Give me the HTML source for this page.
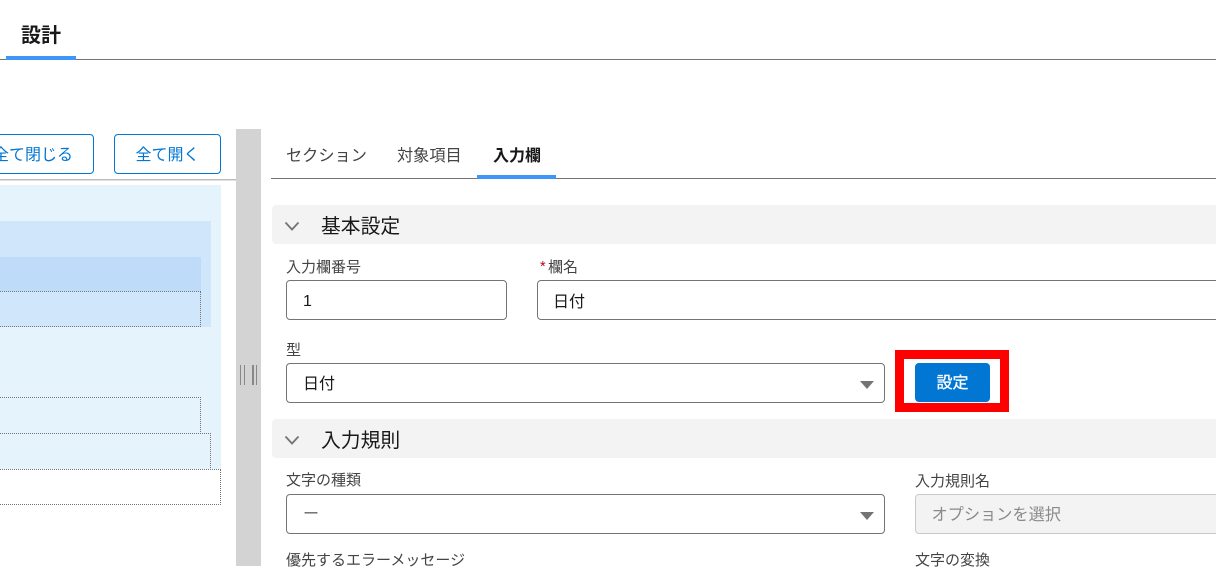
<!DOCTYPE html>
<html lang="ja">
<head>
<meta charset="utf-8">
<title>設計</title>
<style>
html,body{margin:0;padding:0;background:#fff;}
body{width:1216px;height:566px;overflow:hidden;position:relative;font-family:"Liberation Sans","Noto Sans CJK JP",sans-serif;color:#181818;}
.a{position:absolute;box-sizing:border-box;}
.t{position:absolute;white-space:nowrap;line-height:20px;height:20px;}
.lbl{font-size:15px;color:#444;}
.inp{position:absolute;box-sizing:border-box;border:1px solid #747474;border-radius:4px;background:#fff;}
.val{font-size:16px;color:#181818;}
.sec{position:absolute;left:272px;width:960px;height:39px;background:#f3f3f3;border-radius:4px;}
.sect{font-size:20px;color:#181818;line-height:28px;height:28px;}
.box{position:absolute;box-sizing:border-box;left:-5px;border:1px dotted #747474;}
.btn{position:absolute;box-sizing:border-box;height:40px;top:134px;padding-top:3px;border:1px solid #0176d3;border-radius:4px;background:#fff;color:#0176d3;font-size:16px;line-height:36px;text-align:center;white-space:nowrap;}
</style>
</head>
<body>
<div class="t" style="left:21px;top:26px;font-size:20px;font-weight:700;color:#181818;">設計</div>
<div class="a" style="left:0;top:59px;width:1216px;height:1px;background:#747474;"></div>
<div class="a" style="left:6px;top:56px;width:70px;height:4px;background:#3d96f8;"></div>

<div class="btn" style="left:-28px;width:122px;">全て閉じる</div>
<div class="btn" style="left:114px;width:107px;">全て開く</div>
<div class="a" style="left:0;top:179px;width:236px;height:1px;background:#bcbcbc;"></div>
<div class="a" style="left:0;top:180px;width:236px;height:1px;background:#e0e0e0;"></div>

<div class="a" style="left:0;top:185px;width:221px;height:284px;background:#e5f3fd;"></div>
<div class="a" style="left:0;top:221px;width:211px;height:106px;background:#d0e7fb;"></div>
<div class="a" style="left:0;top:257px;width:201px;height:34px;background:#bedcf9;"></div>
<div class="box" style="top:291px;width:206px;height:36px;"></div>
<div class="box" style="top:397px;width:206px;height:37px;"></div>
<div class="box" style="top:433px;width:216px;height:37px;"></div>
<div class="box" style="top:469px;width:226px;height:36px;background:#fff;"></div>

<div class="a" style="left:236px;top:129px;width:25px;height:437px;background:#d3d3d3;"></div>
<div class="a" style="left:240px;top:365px;width:1px;height:20px;background:#888;"></div>
<div class="a" style="left:244px;top:365px;width:1px;height:20px;background:#888;"></div>
<div class="a" style="left:252px;top:365px;width:2px;height:20px;background:#888;"></div>
<div class="a" style="left:256px;top:365px;width:1px;height:20px;background:#888;"></div>

<div class="t" style="left:286px;top:146px;font-size:16.2px;color:#444;">セクション</div>
<div class="t" style="left:397px;top:146px;font-size:16.2px;color:#444;">対象項目</div>
<div class="t" style="left:493px;top:147px;font-size:16px;font-weight:700;color:#181818;">入力欄</div>
<div class="a" style="left:271px;top:178px;width:945px;height:1px;background:#747474;"></div>
<div class="a" style="left:477px;top:175px;width:79px;height:4px;background:#3d96f8;"></div>

<div class="sec" style="top:205px;"></div>
<svg class="a" style="left:284px;top:221px;" width="16" height="11" viewBox="0 0 16 11"><path d="M1.5 1.5 L8 8.5 L14.5 1.5" fill="none" stroke="#747474" stroke-width="1.8"/></svg>
<div class="t sect" style="left:321px;top:213px;font-size:19.8px;">基本設定</div>

<div class="t lbl" style="left:286px;top:258px;">入力欄番号</div>
<div class="inp" style="left:286px;top:280px;width:221px;height:40px;"></div>
<div class="t val" style="left:303px;top:292px;">1</div>
<div class="t" style="left:540px;top:257px;font-size:14.5px;color:#ba0517;">*</div>
<div class="t lbl" style="left:548px;top:258px;">欄名</div>
<div class="inp" style="left:537px;top:280px;width:700px;height:40px;"></div>
<div class="t val" style="left:553px;top:293px;">日付</div>

<div class="t lbl" style="left:286px;top:341px;">型</div>
<div class="inp" style="left:286px;top:363px;width:599px;height:40px;"></div>
<div class="t val" style="left:303px;top:375px;">日付</div>
<svg class="a" style="left:860px;top:381px;" width="14" height="8" viewBox="0 0 14 8"><path d="M0 0 H14 L7 8 Z" fill="#747474"/></svg>

<div class="a" style="left:895px;top:350px;width:114px;height:62px;border:9px solid #ff0000;background:#fff;"></div>
<div class="a" style="left:915px;top:363px;width:75px;height:39px;background:#0176d3;border-radius:4px;color:#fff;font-size:16px;font-weight:400;-webkit-text-stroke:0.3px #fff;line-height:41px;text-align:center;">設定</div>

<div class="sec" style="top:419px;"></div>
<svg class="a" style="left:284px;top:435px;" width="16" height="11" viewBox="0 0 16 11"><path d="M1.5 1.5 L8 8.5 L14.5 1.5" fill="none" stroke="#747474" stroke-width="1.8"/></svg>
<div class="t sect" style="left:321px;top:427px;font-size:19.8px;">入力規則</div>

<div class="t lbl" style="left:286px;top:471px;">文字の種類</div>
<div class="inp" style="left:286px;top:494px;width:599px;height:40px;"></div>
<div class="t val" style="left:303px;top:505px;color:#666;">ー</div>
<svg class="a" style="left:860px;top:512px;" width="14" height="8" viewBox="0 0 14 8"><path d="M0 0 H14 L7 8 Z" fill="#747474"/></svg>

<div class="t lbl" style="left:915px;top:472px;">入力規則名</div>
<div class="inp" style="left:915px;top:494px;width:340px;height:40px;background:#f3f3f3;border-color:#c9c9c9;"></div>
<div class="t" style="left:931.5px;top:505px;font-size:16.2px;color:#8a8a8a;">オプションを選択</div>

<div class="t lbl" style="left:286px;top:551px;">優先するエラーメッセージ</div>
<div class="t lbl" style="left:915px;top:551px;">文字の変換</div>
</body>
</html>
